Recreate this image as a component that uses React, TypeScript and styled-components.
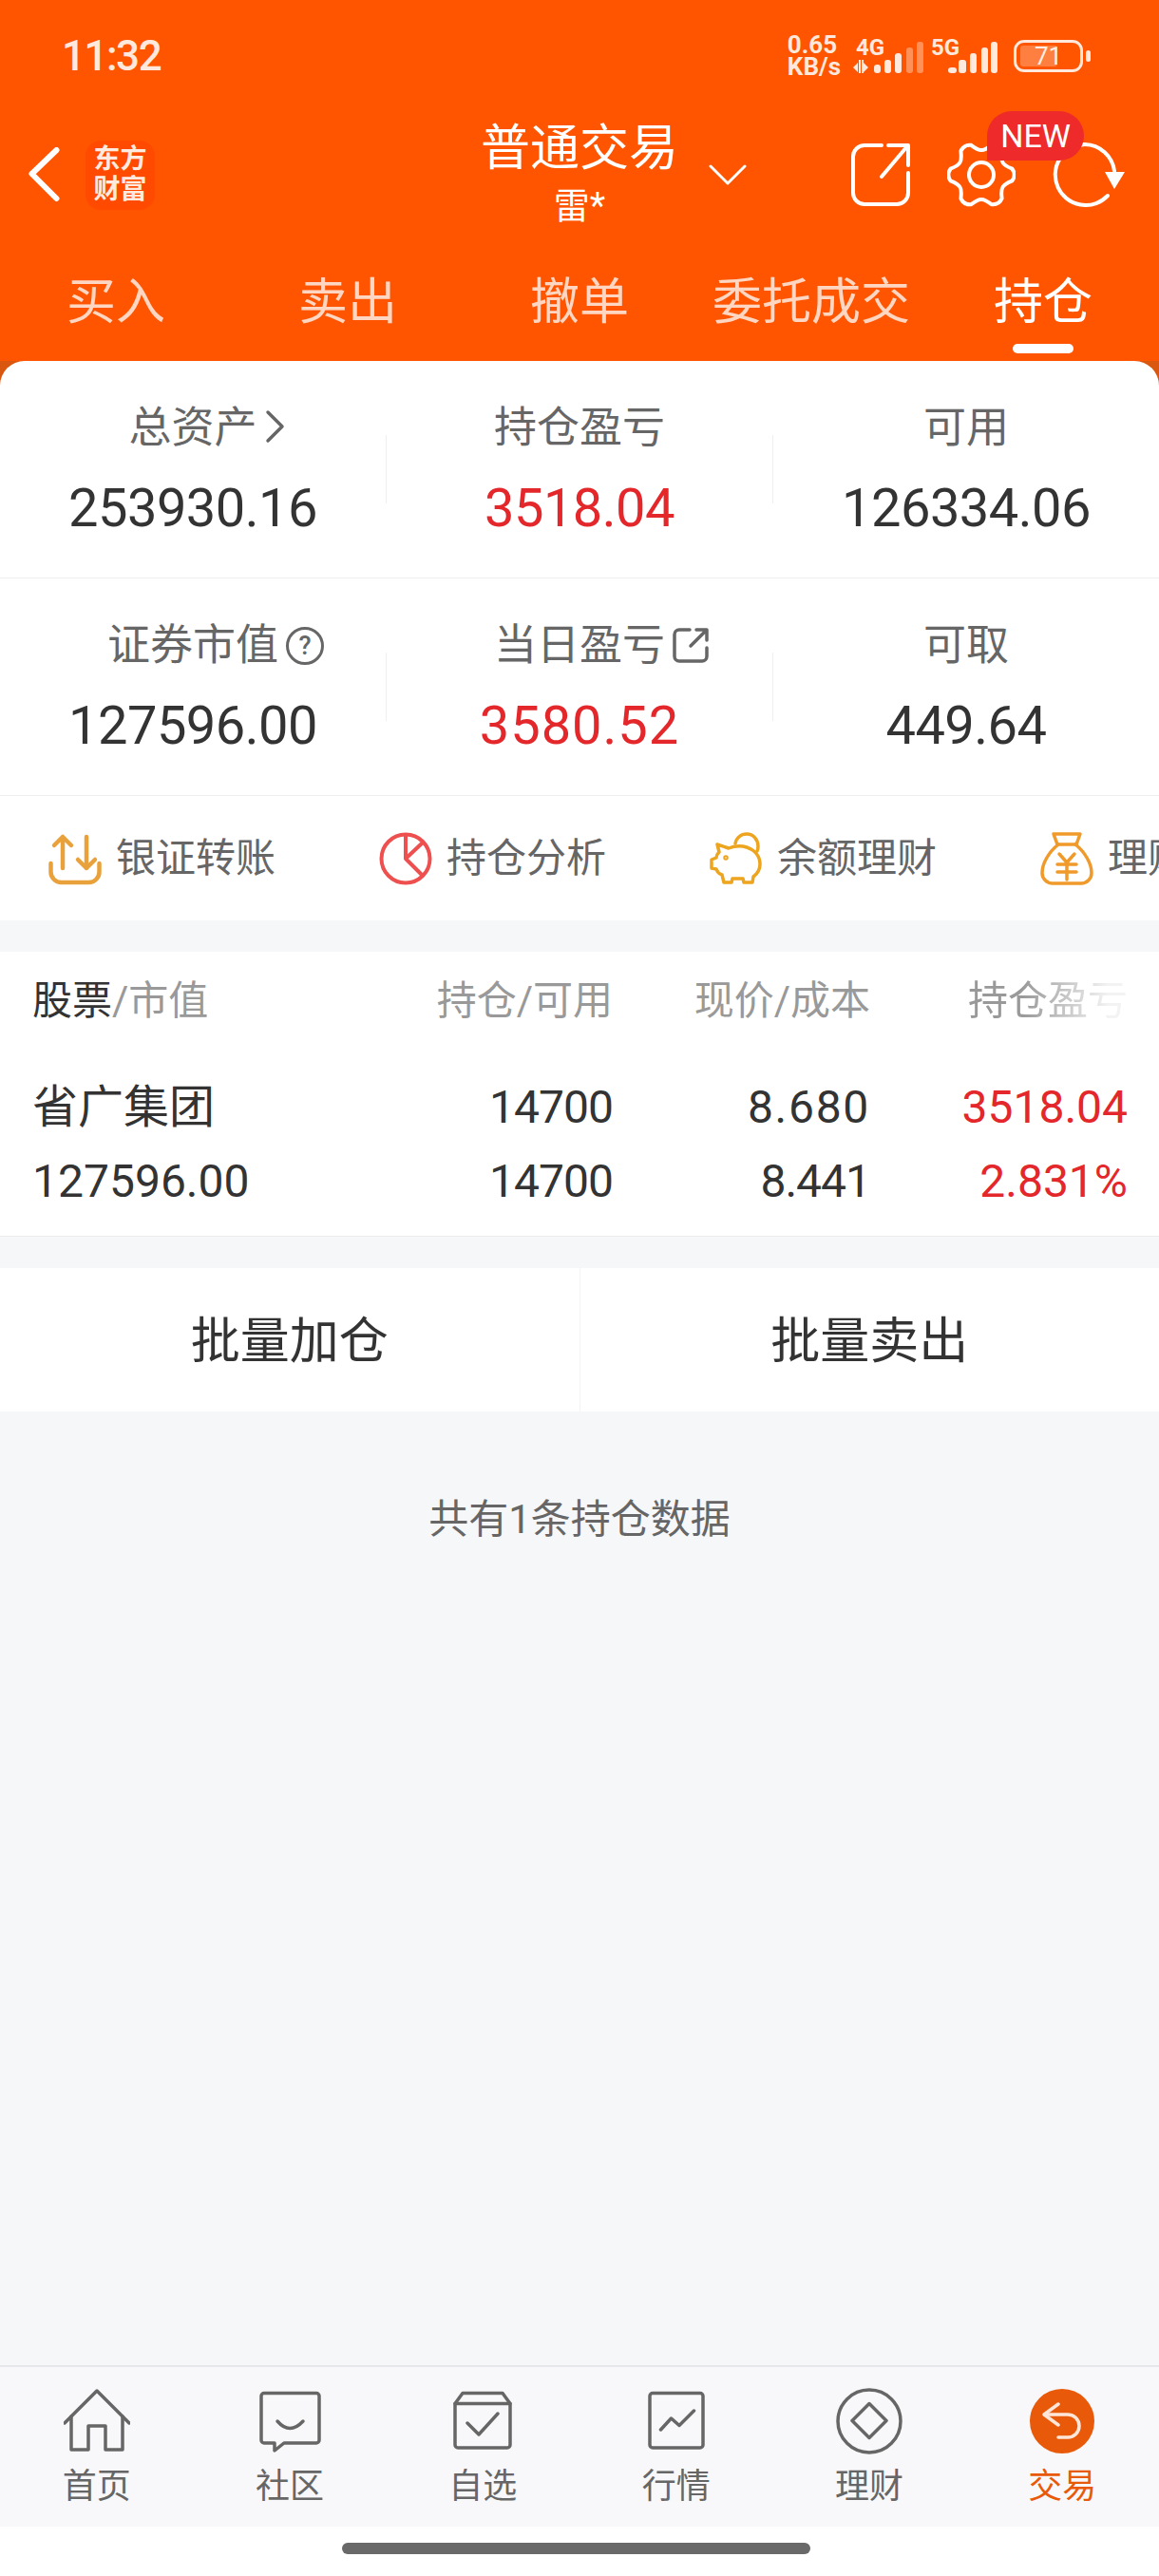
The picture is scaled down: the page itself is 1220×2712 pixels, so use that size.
import React from 'react';
import styled, { createGlobalStyle } from 'styled-components';

const GlobalStyle = createGlobalStyle`
  * { box-sizing: border-box; }
  html, body { margin: 0; padding: 0; background: #fff; }
  body { font-family: Roboto, "Noto Sans CJK SC", sans-serif; }
`

const Page = styled.div`
  width: 1220px;
  height: 2712px;
  display: flex;
  flex-direction: column;
  overflow: hidden;
  background: #f6f7f9;
`

const Header = styled.header`
  background: #ff5500;
  color: #fff;
`

const StatusBar = styled.div`
  height: 118px;
  padding: 0 72px 0 65px;
  display: flex;
  align-items: center;
  justify-content: space-between;
  color: #ffe8dc;
`

const Clock = styled.div`
  font-size: 44px;
  font-weight: 500;
  line-height: 50px;
  letter-spacing: -1.5px;
`

const StatusRight = styled.div`
  display: flex;
  align-items: center;
`

const Speed = styled.div`
  font-size: 26px;
  font-weight: 700;
  line-height: 23px;
  margin-right: 13px;
`

const Signal = styled.svg<{ $gap: number }>`
  display: block;
  margin-right: ${p => p.$gap}px;
  fill: #ffe8dc;
  text {
    font-family: Roboto, sans-serif;
    font-size: 24px;
    font-weight: 700;
  }
`

const BatteryBody = styled.div`
  position: relative;
  width: 73px;
  height: 34px;
  border: 3px solid #ffe8dc;
  border-radius: 11px;
  display: flex;
  align-items: center;
  justify-content: center;
  font-size: 26px;
  line-height: 28px;
`

const BatteryFill = styled.div`
  position: absolute;
  left: 4px;
  top: 3px;
  bottom: 3px;
  border-radius: 3px;
  background: rgba(255, 255, 255, 0.25);
`

const BatteryCap = styled.div`
  width: 5px;
  height: 12px;
  margin-left: 3px;
  border-radius: 3px;
  background: #ffe8dc;
`

const NavRow = styled.div`
  height: 132px;
  display: grid;
  grid-template-columns: 1fr 212px 1fr;
  align-items: center;
`

const NavLeft = styled.div`
  display: flex;
  align-items: center;
  padding-left: 30px;
  gap: 27px;
`

const Logo = styled.div`
  width: 73px;
  height: 73px;
  border-radius: 16px;
  background: #ff4a00;
  color: #ffeadf;
  display: flex;
  align-items: center;
  justify-content: center;
  text-align: center;
  font-size: 28px;
  font-weight: 700;
  line-height: 32px;
`

const TitleBlock = styled.div`
  display: flex;
  flex-direction: column;
  align-items: center;
`

const Title = styled.div`
  font-size: 52px;
  line-height: 60px;
  white-space: nowrap;
`

const SubTitle = styled.div`
  font-size: 38px;
  line-height: 50px;
  margin-top: 5px;
`

const NavRight = styled.div`
  display: flex;
  align-items: center;
  padding-left: 30px;
  padding-right: 35px;
`

const NavIcons = styled.div`
  margin-left: auto;
  display: flex;
  align-items: center;
  gap: 38px;
`

const GearWrap = styled.div`
  position: relative;
  display: flex;
`

const NewBadge = styled.div`
  position: absolute;
  left: 42px;
  top: -32px;
  width: 102px;
  height: 52px;
  border-radius: 26px 26px 26px 0;
  background: #ee2a2a;
  color: #fff;
  font-size: 34px;
  line-height: 52px;
  text-align: center;
`

const Tabs = styled.nav`
  height: 130px;
  display: grid;
  grid-template-columns: repeat(5, 1fr);
`

const Tab = styled.div<{ $active?: boolean }>`
  display: flex;
  flex-direction: column;
  align-items: center;
  padding-top: 39px;
  font-size: 52px;
  line-height: 60px;
  color: ${p => (p.$active ? '#fff' : 'rgba(255, 255, 255, 0.76)')};
`

const TabMark = styled.div`
  width: 64px;
  height: 10px;
  margin-top: 13px;
  border-radius: 5px;
  background: #fff;
`

const CardBack = styled.div`
  background: #d9570f;
`

const Summary = styled.section`
  background: #fff;
  border-radius: 26px 26px 0 0;
`

const StatRow = styled.div`
  height: 229px;
  display: grid;
  grid-template-columns: 1fr 1px 1fr 1px 1fr;
  align-items: center;
  border-bottom: 1px solid #eeeeee;
`

const StatDivider = styled.div`
  height: 72px;
  background: #efefef;
`

const Stat = styled.div`
  display: flex;
  flex-direction: column;
  align-items: center;
`

const StatLabel = styled.div`
  position: relative;
  margin-top: 2px;
  font-size: 45px;
  line-height: 60px;
  color: #666;
`

const StatIcon = styled.span`
  position: absolute;
  left: 100%;
  top: 10px;
  margin-left: 8px;
  display: flex;
`

const HelpMark = styled.span`
  width: 40px;
  height: 40px;
  border: 3px solid #666;
  border-radius: 50%;
  display: flex;
  align-items: center;
  justify-content: center;
  font-size: 27px;
  line-height: 34px;
  font-weight: 500;
`

const StatValue = styled.div<{ $red?: boolean; $track?: number }>`
  margin-top: 19px;
  font-size: 56px;
  line-height: 70px;
  letter-spacing: ${p => p.$track ?? -0.5}px;
  color: ${p => (p.$red ? '#e3272b' : '#333')};
`

const ToolRow = styled.div`
  height: 131px;
  display: flex;
  overflow: hidden;
  background: #fff;
`

const Tool = styled.div`
  flex: 0 0 348px;
  padding-left: 51px;
  display: flex;
  align-items: center;
  gap: 15px;
  font-size: 42px;
  color: #666;
  white-space: nowrap;
`

const ToolLabel = styled.span`
  padding-bottom: 8px;
`

const Holdings = styled.section`
  margin-top: 33px;
  height: 300px;
  background: #fff;
  border-bottom: 1px solid #ececec;
  padding: 22px 33px 0 34px;
`

const Line = styled.div<{ $size: number; $height: number; $gap?: number }>`
  display: grid;
  grid-template-columns: 1fr 271px 271px 271px;
  height: ${p => p.$height}px;
  line-height: ${p => p.$height}px;
  font-size: ${p => p.$size}px;
  margin-top: ${p => p.$gap || 0}px;
  color: #333;
`

const Cell = styled.div<{ $right?: boolean; $red?: boolean; $muted?: boolean; $fade?: boolean; $track?: number }>`
  text-align: ${p => (p.$right ? 'right' : 'left')};
  color: ${p => (p.$red ? '#e3272b' : p.$muted ? '#999' : 'inherit')};
  letter-spacing: ${p => p.$track || 0}px;
  ${p => p.$fade && `
    -webkit-mask-image: linear-gradient(to right, #000 160px, rgba(0, 0, 0, 0.12) 250px);
    mask-image: linear-gradient(to right, #000 160px, rgba(0, 0, 0, 0.12) 250px);
  `}
`

const Muted = styled.span`
  color: #999;
`

const Actions = styled.div`
  margin-top: 33px;
  height: 151px;
  display: grid;
  grid-template-columns: 1fr 1px 1fr;
  align-items: center;
  background: #fff;
`

const ActionButton = styled.div`
  text-align: center;
  font-size: 52px;
  color: #333;
  padding-bottom: 6px;
`

const ActionDivider = styled.div`
  height: 100%;
  background: #f4f4f4;
`

const EmptyNote = styled.div`
  flex: 1;
  padding-top: 84px;
  text-align: center;
  font-size: 42px;
  line-height: 60px;
  color: #666;
`

const TabBar = styled.nav`
  height: 170px;
  padding-top: 22px;
  display: grid;
  grid-template-columns: repeat(6, 1fr);
  background: #f8f8fa;
  border-top: 2px solid #e6e7eb;
`

const BarItem = styled.div<{ $active?: boolean }>`
  display: flex;
  flex-direction: column;
  align-items: center;
  font-size: 36px;
  line-height: 44px;
  color: ${p => (p.$active ? '#e85a0a' : '#666')};
  svg {
    display: block;
    margin-bottom: 12px;
  }
`

const GestureZone = styled.div`
  height: 52px;
  padding-top: 17px;
  background: #fff;
`

const GestureBar = styled.div`
  width: 493px;
  height: 12px;
  margin-left: 360px;
  border-radius: 6px;
  background: #696969;
`

// six rounded teeth round the gear
const gearPath = (() => {
  const cx = 36;
  const cy = 35;
  const point = (deg: number, r: number) => {
    const a = (deg * Math.PI) / 180;
    return `${(cx + r * Math.cos(a)).toFixed(1)} ${(cy + r * Math.sin(a)).toFixed(1)}`;
  };
  let d = `M${point(-11, 33)}`;
  for (let k = 0; k < 6; k++) {
    const base = k * 60;
    d += ` Q${point(base, 37)} ${point(base + 11, 33)}`;
    d += ` Q${point(base + 22, 26)} ${point(base + 30, 26)}`;
    d += ` Q${point(base + 38, 26)} ${point(base + 49, 33)}`;
  }
  return d + 'Z';
})();

const stroke = (color: string, width: number) => ({
  fill: 'none',
  stroke: color,
  strokeWidth: width,
  strokeLinecap: 'round' as const,
  strokeLinejoin: 'round' as const,
});

const SmallShare = () => (
  <svg width="38" height="38" viewBox="0 0 38 38" {...stroke('#666', 3.5)}>
    <path d="M18 3H7a5 5 0 0 0-5 5v23a5 5 0 0 0 5 5h24a5 5 0 0 0 5-5V22" />
    <path d="M19 20L35 4M25 3h11v11" />
  </svg>
);

const Chevron = () => (
  <svg width="22" height="36" viewBox="0 0 22 36" {...stroke('#666', 3.5)}>
    <path d="M3 3l15 15L3 33" />
  </svg>
);

const tools = [
  {
    label: '银证转账',
    icon: (
      <svg width="56" height="56" viewBox="0 0 56 56" {...stroke('#e9a23b', 4.5)}>
        <path d="M15 38V5M6 14l9-9 9 9M40 5v33M31 29l9 9 9-9" />
        <path d="M2.500 33v9a11 11 0 0 0 11 11h29a11 11 0 0 0 11-11v-9" />
      </svg>
    ),
  },
  {
    label: '持仓分析',
    icon: (
      <svg width="56" height="56" viewBox="0 0 56 56" {...stroke('#ee4f4f', 4)}>
        <circle cx="28" cy="28" r="25.500" />
        <path d="M28 3v25l18-17M28 28l17 17" />
      </svg>
    ),
  },
  {
    label: '余额理财',
    icon: (
      <svg width="56" height="56" viewBox="0 0 56 56" {...stroke('#eda41e', 3.5)}>
        <path d="M8 13l12 4c5-2 13-3 19-1 9 3 14 10 14 18 0 6-3 10-7 13l-1 6h-9l-1-4H24l-1 4h-8l-2-8c-3-1-5-3-6-6l-5-1v-9l5-2c0-3 2-5 3-6z" />
        <path d="M27 12c1-6 6-10 12-10 7 0 12 6 12 13 0 2 0 3-1 5" />
        <circle cx="17" cy="27" r="1" />
      </svg>
    ),
  },
  {
    label: '理财产品',
    icon: (
      <svg width="56" height="56" viewBox="0 0 56 56" {...stroke('#f09a2b', 3.5)}>
        <path d="M14 2h28l-4 11H18z" />
        <path d="M19 13C9 21 2 33 2 43a11 11 0 0 0 11 11h30a11 11 0 0 0 11-11c0-10-7-22-17-30" />
        <path d="M20 23l8 9 8-9M18 34h20M18 42h20M28 32v18" />
      </svg>
    ),
  },
];

const barItems = [
  {
    label: '首页',
    icon: (
      <>
        <path d="M1 37L35 3l34 34" />
        <path d="M8 30v35h18V40h18v25h18V30" />
      </>
    ),
  },
  {
    label: '社区',
    icon: (
      <>
        <path d="M8 5.500h55a3 3 0 0 1 3 3V55a3 3 0 0 1-3 3H29l-10 8V58H8a3 3 0 0 1-3-3V8.500a3 3 0 0 1 3-3z" />
        <path d="M22 35q13 15 27 0" />
      </>
    ),
  },
  {
    label: '自选',
    icon: (
      <>
        <path d="M14 5.500h42l8 11V60a3 3 0 0 1-3 3H9a3 3 0 0 1-3-3V16.500z" />
        <path d="M6 16.500h58M19 37l12 12 20-22" />
      </>
    ),
  },
  {
    label: '行情',
    icon: (
      <>
        <rect x="7" y="5.500" width="56" height="57.500" rx="3" />
        <path d="M18.500 44L29.500 32l8.500 7.500L53.500 24" />
      </>
    ),
  },
  {
    label: '理财',
    icon: (
      <>
        <circle cx="35" cy="35" r="33" />
        <path d="M35 16.500L53 34.500 35 52.500 17 34.500z" />
      </>
    ),
  },
];

const App: React.FC = () => {
  return (
    <Page>
      <GlobalStyle />
      <Header>
        <StatusBar>
          <Clock>11:32</Clock>
          <StatusRight>
            <Speed>
              0.65
              <br />
              KB/s
            </Speed>
            <Signal $gap={8} width="74" height="52" viewBox="0 -6 74 52">
              <text x="3" y="19">4G</text>
              <path d="M0 32l5-5v10zM11 27l5 5-5 5z" />
              <rect x="6" y="24" width="2" height="14" />
              <rect x="9" y="24" width="2" height="14" />
              <rect x="22" y="29" width="7" height="9" rx="3" />
              <rect x="33" y="24" width="7" height="14" rx="3" />
              <rect x="44" y="17" width="7" height="21" rx="3" />
              <rect x="56" y="11" width="7" height="27" rx="3" opacity="0.4" />
              <rect x="67" y="5" width="7" height="33" rx="3" opacity="0.4" />
            </Signal>
            <Signal $gap={17} width="70" height="52" viewBox="0 -6 70 52">
              <text x="0" y="19">5G</text>
              <rect x="18" y="32" width="9" height="6" rx="3" />
              <rect x="29" y="24" width="8" height="14" rx="3" />
              <rect x="41" y="17" width="7" height="21" rx="3" />
              <rect x="53" y="11" width="7" height="27" rx="3" />
              <rect x="63" y="5" width="7" height="33" rx="3" />
            </Signal>
            <BatteryBody>
              <BatteryFill style={{ width: `${71 * 0.55}px` }} />
              71
            </BatteryBody>
            <BatteryCap />
          </StatusRight>
        </StatusBar>

        <NavRow>
          <NavLeft>
            <svg width="33" height="58" viewBox="0 0 33 58" {...stroke('#fff', 6)}>
              <path d="M29.500 3L3.500 28l26 26" />
            </svg>
            <Logo>
              东方
              <br />
              财富
            </Logo>
          </NavLeft>
          <TitleBlock>
            <Title>普通交易</Title>
            <SubTitle>雷*</SubTitle>
          </TitleBlock>
          <NavRight>
            <svg width="40" height="22" viewBox="0 0 40 22" {...stroke('#fff', 3)}>
              <path d="M2 2l18 18L38 2" />
            </svg>
            <NavIcons>
              <svg width="64" height="68" viewBox="0 0 64 68" {...stroke('#fff', 4)}>
                <path d="M33 3H15A12 12 0 0 0 3 15v38a12 12 0 0 0 12 12h34a12 12 0 0 0 12-12V32" />
                <path d="M33 36L60 4M40 3h21v21" />
              </svg>
              <GearWrap>
                <svg width="72" height="70" viewBox="0 0 72 70" {...stroke('#fff', 4)}>
                  <path d={gearPath} />
                  <circle cx="36" cy="35" r="13" />
                </svg>
                <NewBadge>NEW</NewBadge>
              </GearWrap>
              <svg width="78" height="68" viewBox="0 0 78 68">
                <g {...stroke('#fff', 4)}>
                  <path d="M35 2A32 32 0 0 1 66 30" />
                  <path d="M59 56A32 32 0 1 1 35 2" />
                </g>
                <path d="M56 31h21L66 49z" fill="#fff" />
              </svg>
            </NavIcons>
          </NavRight>
        </NavRow>

        <Tabs>
          <Tab>买入</Tab>
          <Tab>卖出</Tab>
          <Tab>撤单</Tab>
          <Tab>委托成交</Tab>
          <Tab $active>
            持仓
            <TabMark />
          </Tab>
        </Tabs>
      </Header>

      <CardBack>
        <Summary>
          <StatRow>
            <Stat>
              <StatLabel>
                总资产
                <StatIcon>
                  <Chevron />
                </StatIcon>
              </StatLabel>
              <StatValue>253930.16</StatValue>
            </Stat>
            <StatDivider />
            <Stat>
              <StatLabel>持仓盈亏</StatLabel>
              <StatValue $red>3518.04</StatValue>
            </Stat>
            <StatDivider />
            <Stat>
              <StatLabel>可用</StatLabel>
              <StatValue>126334.06</StatValue>
            </Stat>
          </StatRow>
          <StatRow>
            <Stat>
              <StatLabel>
                证券市值
                <StatIcon>
                  <HelpMark>?</HelpMark>
                </StatIcon>
              </StatLabel>
              <StatValue>127596.00</StatValue>
            </Stat>
            <StatDivider />
            <Stat>
              <StatLabel>
                当日盈亏
                <StatIcon>
                  <SmallShare />
                </StatIcon>
              </StatLabel>
              <StatValue $red $track={1}>3580.52</StatValue>
            </Stat>
            <StatDivider />
            <Stat>
              <StatLabel>可取</StatLabel>
              <StatValue>449.64</StatValue>
            </Stat>
          </StatRow>
          <ToolRow>
            {tools.map(tool => (
              <Tool key={tool.label}>
                {tool.icon}
                <ToolLabel>{tool.label}</ToolLabel>
              </Tool>
            ))}
          </ToolRow>
        </Summary>
      </CardBack>

      <Holdings>
        <Line $size={42} $height={60}>
          <Cell>
            股票<Muted>/市值</Muted>
          </Cell>
          <Cell $right $muted>持仓/可用</Cell>
          <Cell $right $muted>现价/成本</Cell>
          <Cell $right $muted $fade>持仓盈亏</Cell>
        </Line>
        <Line $size={48} $height={60} $gap={52}>
          <Cell>省广集团</Cell>
          <Cell $right $track={-1}>14700</Cell>
          <Cell $right $track={1.7}>8.680</Cell>
          <Cell $right $red>3518.04</Cell>
        </Line>
        <Line $size={48} $height={60} $gap={18}>
          <Cell>127596.00</Cell>
          <Cell $right $track={-1}>14700</Cell>
          <Cell $right $track={-1}>8.441</Cell>
          <Cell $right $red>2.831%</Cell>
        </Line>
      </Holdings>

      <Actions>
        <ActionButton>批量加仓</ActionButton>
        <ActionDivider />
        <ActionButton>批量卖出</ActionButton>
      </Actions>

      <EmptyNote>共有1条持仓数据</EmptyNote>

      <TabBar>
        {barItems.map(item => (
          <BarItem key={item.label}>
            <svg width="70" height="70" viewBox="0 0 70 70" {...stroke('#666', 3.5)}>
              {item.icon}
            </svg>
            {item.label}
          </BarItem>
        ))}
        <BarItem $active>
          <svg width="70" height="70" viewBox="0 0 70 70">
            <circle cx="35" cy="35" r="34" fill="#e85a0a" />
            <g {...stroke('#ffe6d8', 3.5)}>
              <path d="M17 28h24a12 12 0 0 1 0 24H31" />
              <path d="M31 17L16 28l15 11" />
            </g>
          </svg>
          交易
        </BarItem>
      </TabBar>
      <GestureZone>
        <GestureBar />
      </GestureZone>
    </Page>
  );
};

export default App;
